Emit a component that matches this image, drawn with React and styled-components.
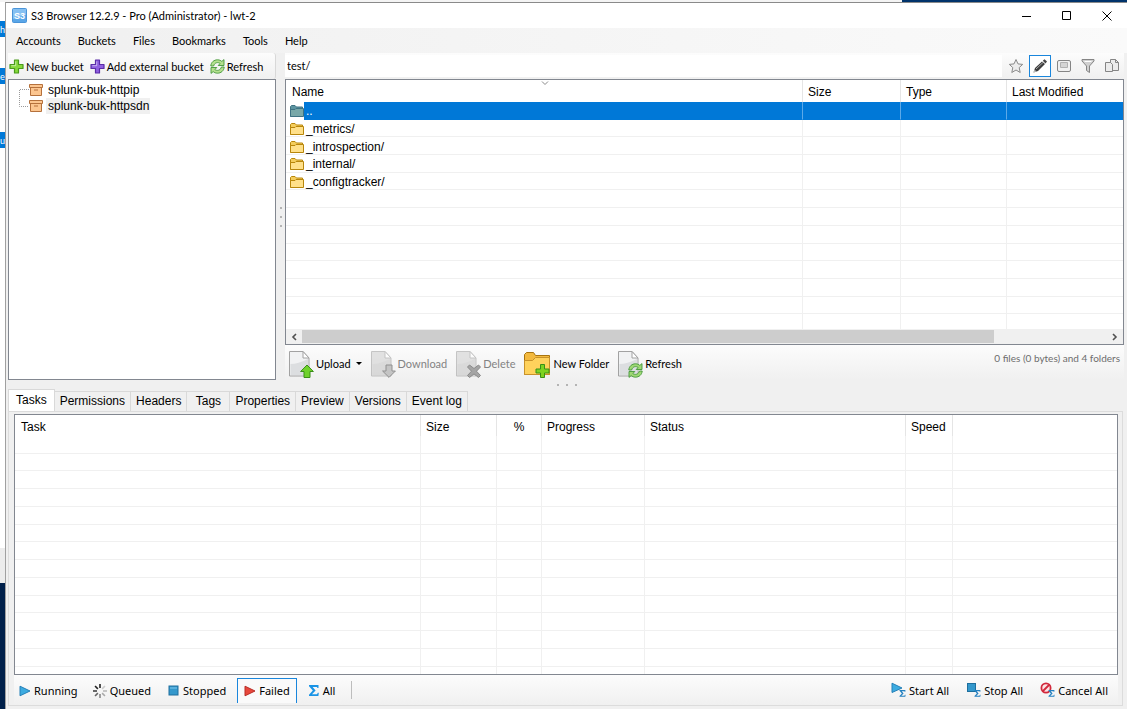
import React, { useState } from "react";
import styled, { createGlobalStyle, css } from "styled-components";

const GlobalStyle = createGlobalStyle`
  * {
    box-sizing: border-box;
  }
  body {
    margin: 0;
    background-color: #f0f0f0;
    color: #000;
    font-family: Lato, "Open Sans", sans-serif;
    font-size: 11px;
  }
  button, input {
    font: inherit;
    color: inherit;
  }
  svg {
    display: block;
    flex: none;
  }
`;

const Screen = styled.div`
  display: grid;
  grid-template-columns: 5px 1fr;
  grid-template-rows: 2px 1fr;
  min-height: 100vh;
`;

const TopEdge = styled.div`
  grid-column: 1 / -1;
  background: linear-gradient(to right, #f4f4f4 80%, #00336b 80%);
`;

const Behind = styled.div`
  display: flex;
  flex-direction: column;
  background-color: #fff;
`;

const BehindGap = styled.div`
  height: ${props => props.$size}px;
  flex: none;
  background-color: ${props => props.$color || "#fff"};
`;

const BehindText = styled.div`
  display: flex;
  align-items: center;
  justify-content: center;
  height: 16px;
  flex: none;
  background-color: #0078d7;
  color: #fff;
  font-size: 9px;
`;

const Desktop = styled.div`
  flex: 1;
  background-color: #00204a;
`;

const Window = styled.div`
  display: flex;
  flex-direction: column;
  min-width: 0;
  border-left: 1px solid #a0a0a0;
  border-top: 1px solid #8a8a8a;
`;

const TitleBar = styled.header`
  display: flex;
  align-items: center;
  height: 25px;
  padding-left: 6px;
  background-color: #fff;
`;

const Title = styled.h1`
  flex: 1;
  margin: 0;
  padding-left: 4px;
  font-size: 11px;
  font-weight: 400;
`;

const WindowButton = styled.button`
  display: flex;
  align-items: center;
  justify-content: center;
  width: 40px;
  height: 25px;
  padding: 0;
  border: 0;
  background: none;
`;

const MenuBar = styled.nav`
  display: flex;
  align-items: center;
  height: 25px;
  padding-left: 10px;
  gap: 17px;
  background: linear-gradient(to right, #f0f0f0, #fafafa);
`;

const MenuItem = styled.button`
  padding: 0;
  border: 0;
  background: none;
`;

const Upper = styled.main`
  display: flex;
  height: 327px;
  padding: 0 3px 0 2px;
`;

const Side = styled.aside`
  display: flex;
  flex-direction: column;
  flex: none;
  width: 268px;
`;

const bar = css`
  display: flex;
  align-items: center;
  background: linear-gradient(#fcfcfc, #f0f0f0);
`;

const SideTools = styled.div`
  ${bar}
  height: 26px;
  padding-left: 1px;
  gap: 6px;
  border-right: 1px solid #d8d8d8;
  border-radius: 0 3px 3px 0;
`;

const ToolButton = styled.button`
  display: flex;
  align-items: center;
  padding: 0;
  gap: ${props => props.$gap || 2}px;
  border: 0;
  background: none;
  white-space: nowrap;

  &:disabled {
    color: #838383;
  }
`;

const Tree = styled.ul`
  flex: 1;
  margin: 0;
  padding: 2px 0 0 10px;
  list-style: none;
  border: 1px solid #828790;
  background-color: #fff;
  font-family: "Liberation Sans", Arial, sans-serif;
  font-size: 12px;
`;

const TreeItem = styled.li`
  display: flex;
  align-items: center;
  height: 16px;
`;

const TreeLabel = styled.span`
  height: 16px;
  margin-left: 3px;
  padding: 0 1px 0 2px;
  line-height: 16px;
  background-color: ${props => (props.$active ? "#f0f0f0" : "transparent")};
`;

const Grip = styled.div`
  display: flex;
  flex-direction: ${props => (props.$row ? "row" : "column")};
  align-items: center;
  justify-content: center;
  gap: 7px;
  flex: none;
  width: ${props => (props.$row ? "auto" : "9px")};
  height: ${props => (props.$row ? "9px" : "auto")};
`;

const Dot = styled.i`
  width: 2px;
  height: 2px;
  background-color: #b4b4b4;
`;

const Content = styled.section`
  display: flex;
  flex-direction: column;
  flex: 1;
  min-width: 0;
`;

const PathRow = styled.div`
  ${bar}
  height: 26px;
`;

const PathInput = styled.input`
  flex: 1;
  min-width: 0;
  height: 22px;
  padding: 0 0 2px 2px;
  border: 0;
  background-color: #fff;
`;

const IconButton = styled.button`
  display: flex;
  align-items: center;
  justify-content: center;
  width: 22px;
  height: 22px;
  padding: 0;
  border: 1px solid ${props => (props.$on ? "#1a86dc" : "transparent")};
  background-color: ${props => (props.$on ? "#fff" : "transparent")};
`;

const PathIcons = styled.div`
  display: flex;
  gap: 2px;
  padding: 0 1px 0 3px;
`;

const ListBox = styled.div`
  position: relative;
  display: flex;
  flex-direction: column;
  height: 266px;
  overflow: hidden;
  border: 1px solid #828790;
  background-color: #fff;
`;

const ListBody = styled.div`
  flex: 1;
  min-height: 0;
  overflow: hidden;
`;

const Table = styled.table`
  width: 100%;
  height: ${props => props.$height}px;
  table-layout: fixed;
  border-collapse: separate;
  border-spacing: 0;
  font-family: "Liberation Sans", Arial, sans-serif;
  font-size: 12px;

  th {
    height: ${props => props.$head}px;
    padding: 2px 5px 0;
    border-right: 1px solid #e5e5e5;
    font-weight: 400;
    text-align: left;
    white-space: nowrap;
  }
  th:first-child {
    padding-left: 6px;
  }
  td {
    height: 17px;
    padding: 2px 0 0;
    border-right: 1px solid #f0f0f0;
    border-bottom: 1px solid #f0f0f0;
    line-height: 14px;
  }
  th:last-child, td:last-child {
    border-right: 0;
  }
`;

const CenterHead = styled.th`
  && {
    text-align: center;
  }
`;

const Row = styled.tr`
  ${props => props.$selected && css`
    color: #fff;
    td {
      background-color: #0078d7;
      border-right-color: #5ca9e8;
      border-bottom-color: transparent;
    }
    td:first-child {
      background-image: linear-gradient(to right, #fff 18px, transparent 18px);
      background-origin: border-box;
    }
  `}
  ${props => props.$short && css`
    td {
      height: 7px;
      border-bottom: 0;
    }
  `}
`;

const FileName = styled.span`
  display: flex;
  align-items: center;
  padding-left: 4px;
  gap: 2px;
`;

const SortMark = styled.span`
  position: absolute;
  top: 1px;
  left: calc(31% - 4px);
`;

const ScrollBar = styled.div`
  display: flex;
  align-items: center;
  flex: none;
  height: 15px;
  background-color: #f0f0f0;
`;

const ScrollTrack = styled.div`
  flex: 1;
  height: 13px;
`;

const ScrollThumb = styled.div`
  width: 86%;
  height: 13px;
  background-color: #cdcdcd;
`;

const ScrollArrow = styled.button`
  display: flex;
  align-items: center;
  justify-content: center;
  width: 16px;
  height: 15px;
  padding: 0;
  border: 0;
  background: none;
`;

const FileTools = styled.div`
  ${bar}
  height: 35px;
  padding: 2px 0 0 3px;
  gap: 8px;
`;

const Caret = styled.svg`
  margin-left: 3px;
`;

const Summary = styled.p`
  align-self: flex-start;
  flex: 1;
  margin: 5px 4px 0 0;
  color: #6d6d6d;
  font-size: 10px;
  text-align: right;
`;

const Tabs = styled.div`
  display: flex;
  align-items: flex-end;
  height: 22px;
  padding-left: 2px;
  font-family: "Liberation Sans", Arial, sans-serif;
  font-size: 12px;
`;

const Tab = styled.button`
  min-width: 43px;
  height: ${props => (props.$active ? 22 : 20)}px;
  padding: 0 ${props => (props.$active ? 7 : 5)}px 2px;
  border: 1px solid #d9d9d9;
  border-left-width: ${props => (props.$active ? 1 : 0)}px;
  border-bottom: 0;
  background-color: ${props => (props.$active ? "#fff" : "#f0f0f0")};
  white-space: nowrap;
`;

const TabPage = styled.section`
  display: flex;
  flex-direction: column;
  flex: 1;
  margin: 0 4px 3px 2px;
  padding: 2px 4px 0 5px;
  border: 1px solid #dcdcdc;
`;

const TaskBox = styled.div`
  flex: 1;
  overflow: hidden;
  border: 1px solid #828790;
  background-color: #fff;
`;

const StatusBar = styled.footer`
  ${bar}
  height: 30px;
  padding-right: 10px;
  gap: 4px;
  font-family: "Noto Sans", sans-serif;
`;

const Filter = styled(ToolButton)`
  height: 25px;
  padding: 0 ${props => props.$pad || 4}px;
  border: 1px solid ${props => (props.$on ? "#1a86dc" : "transparent")};
  border-bottom: 0;
  background-color: ${props => (props.$on ? "#fafafa" : "transparent")};
`;

const Divider = styled.span`
  width: 1px;
  height: 18px;
  margin-left: 4px;
  background-color: #bdbdbd;
`;

const Actions = styled.div`
  display: flex;
  margin-left: auto;
  gap: 17px;
`;

function AppLogo() {
  return (
    <svg width="15" height="15" viewBox="0 0 15 15">
      <rect x="0.5" y="0.5" width="14" height="14" rx="1" fill="#5aa6e8" stroke="#4a94d8" />
      <path d="M1 1h13v6L1 11z" fill="#86c0f2" />
      <text x="7.5" y="10.5" fill="#fff" fontSize="9" fontWeight="700" fontFamily="Liberation Sans" textAnchor="middle">S3</text>
    </svg>
  );
}

function Plus({ fill, stroke }) {
  return (
    <svg width="15" height="15" viewBox="0 0 15 15">
      <path d="M5.500 1h4v4.500H14v4H9.500V14h-4V9.500H1v-4h4.500z" fill={fill} stroke={stroke} strokeWidth="1.2" strokeLinejoin="round" />
      <path d="M6.700 2.400v4.300H2.400" fill="none" stroke="#fff" strokeOpacity=".5" />
    </svg>
  );
}

// two arrows chasing each other, drawn in a 15px box
const swirl = (
  <>
    <path d="M.8 7C1 3.300 4 .8 7.500.8c1.700 0 3.200.6 4.300 1.600L14 .600V6.500H8.200l1.900-2C8.200 2.900 4.700 3.300 3.600 7z" />
    <path d="M14.200 8c-.2 3.700-3.200 6.200-6.700 6.200-1.700 0-3.200-.6-4.300-1.600L1 14.400V8.500h5.800l-1.900 2c1.900 1.600 5.400 1.200 6.500-2.500z" />
  </>
);

function RefreshIcon() {
  return (
    <svg width="15" height="15" viewBox="0 0 15 15" fill="#b4e08e" stroke="#43963a" strokeWidth=".9" strokeLinejoin="round">
      {swirl}
    </svg>
  );
}

function BucketIcon() {
  return (
    <svg width="14" height="14" viewBox="0 0 14 14" fill="#fcc690" stroke="#b5713c">
      <path d="M1.500 4.500h11v8h-11z" />
      <path d="M.5 1.500h13v3H.5z" />
      <path d="M5 7h4" />
    </svg>
  );
}

function Branch({ last }) {
  return (
    <svg width="10" height="16" viewBox="0 0 10 16" fill="none" stroke="#9a9a9a" strokeDasharray="1 1">
      <path d={last ? "M.5 0V8.500H10" : "M10 7.500H.5V16"} />
    </svg>
  );
}

function Folder({ selected }) {
  const stroke = selected ? "#3f7383" : "#b8860b";
  return (
    <svg width="14" height="12" viewBox="0 0 14 12" stroke={stroke} strokeLinejoin="round">
      <path d="M.5 11.500V1.500l1-1H5l1.500 1.500h6v2" fill={selected ? "#5c94a0" : "#f4cd5c"} />
      <path d="M.5 11.500v-7H5l1-1h7.500v8z" fill={selected ? "#79a8a8" : "#ffe08a"} />
    </svg>
  );
}

function PageShape({ faded, children }) {
  return (
    <svg width="26" height="28" viewBox="0 0 26 28">
      <g opacity={faded ? 0.6 : 1}>
        <path d="M1.500 1.500H15l6 6.500v18H1.500z" fill={faded ? "#d2d2d2" : "#f1f2f3"} stroke="#a2a2a2" />
        <path d="M2.500 25V14Q10 14 20 9v16z" fill={faded ? "#c8c8c8" : "#dcdee0"} />
        <path d="M15 1.500V8h6z" fill="#fff" stroke="#a2a2a2" />
      </g>
      {children}
    </svg>
  );
}

function UploadIcon() {
  return (
    <PageShape>
      <path d="M19 15l6.400 6.500h-3.400V27.500h-6v-6h-3.400z" fill="#6fd22b" stroke="#3a8f18" strokeLinejoin="round" />
    </PageShape>
  );
}

function DownloadIcon() {
  return (
    <PageShape faded>
      <path d="M19 27.400l6.400-6.400h-3.400v-6h-6v6h-3.400z" fill="#c4c4c4" stroke="#909090" strokeLinejoin="round" />
    </PageShape>
  );
}

function DeleteIcon() {
  return (
    <PageShape faded>
      <path d="M14.500 15l4.500 3.500 4.500-3.500 2 2-4 4.200 4 4.300-2 2-4.500-3.600-4.500 3.600-2-2 4-4.300-4-4.200z" fill="#a4a4a4" stroke="#8a8a8a" strokeLinejoin="round" />
    </PageShape>
  );
}

function ReloadPageIcon() {
  return (
    <PageShape>
      <g transform="translate(11 13)" fill="#9fd874" stroke="#43963a" strokeWidth=".9" strokeLinejoin="round">
        {swirl}
      </g>
    </PageShape>
  );
}

function NewFolderIcon() {
  return (
    <svg width="28" height="28" viewBox="0 0 28 28" strokeLinejoin="round">
      <path d="M1.500 24.500V4.500l2-2h7l2 3h14v19z" fill="#f3b93e" stroke="#a8740f" />
      <path d="M1.500 24.500v-14h8l3-3h14v17z" fill="#ffd25c" stroke="#c8922a" />
      <path d="M17.500 14.500h4v4.500H26v4h-4.500v4.500h-4V23H13v-4h4.500z" fill="#7ed321" stroke="#3a8f18" />
    </svg>
  );
}

function Star() {
  return (
    <svg width="16" height="16" viewBox="0 0 16 16">
      <path d="M8 1.500l2 4.400 4.700.5-3.500 3.200 1 4.900L8 12l-4.200 2.500 1-4.900L1.300 6.400 6 5.900z" fill="#ececec" stroke="#8a8a8a" strokeLinejoin="round" />
    </svg>
  );
}

function Pencil() {
  return (
    <svg width="16" height="16" viewBox="0 0 16 16">
      <path d="M1.500 14.500l1.500-4.500L10 3.500 13 6 6 13z" fill="#3c3c3c" />
      <path d="M4 11l7-6.500" stroke="#aaa" />
      <path d="M10.800 2.800l1.700-1.500 2.500 2.300-1.500 1.800z" fill="#444" />
      <path d="M1.500 14.500l1-3 2 2z" fill="#bbb" />
    </svg>
  );
}

function Panel() {
  return (
    <svg width="14" height="14" viewBox="0 0 14 14" fill="#f0f0f0" stroke="#858585">
      <rect x=".5" y="1.500" width="13" height="11" rx="1.500" />
      <path d="M3.500 3.500h7v5h-7z" fill="#d4d4d4" stroke="#b0b0b0" />
    </svg>
  );
}

function Funnel() {
  return (
    <svg width="14" height="16" viewBox="0 0 14 16">
      <path d="M1 1.500h12v1.500L8.500 8v6.500l-3-2V8L1 3z" fill="#d0d0d0" stroke="#858585" strokeLinejoin="round" />
      <path d="M3.500 3.500h7" stroke="#fff" />
    </svg>
  );
}

function Pages() {
  return (
    <svg width="16" height="16" viewBox="0 0 16 16" fill="#ececec" stroke="#858585">
      <path d="M6.500 1.500h5l3 3v8h-8z" />
      <path d="M1.500 4.500h5l2 2v7h-7z" />
      <path d="M11.500 1.500v3h3" fill="none" />
    </svg>
  );
}

function Play({ red }) {
  return (
    <svg width="12" height="12" viewBox="0 0 12 12">
      <path d="M1 1.200L11 6 1 10.800z" fill={red ? "#e8483c" : "#3cabe0"} stroke={red ? "#b82c26" : "#2480b8"} strokeLinejoin="round" />
    </svg>
  );
}

function Spinner() {
  const shades = ["#222", "#ccc", "#bbb", "#aaa", "#888", "#666", "#444", "#222"];
  return (
    <svg width="14" height="14" viewBox="0 0 14 14" strokeWidth="1.600">
      {shades.map((color, i) => (
        <path key={i} d="M7 0v4" stroke={color} transform={`rotate(${i * 45} 7 7)`} />
      ))}
    </svg>
  );
}

function StopIcon() {
  return (
    <svg width="12" height="11" viewBox="0 0 12 11">
      <rect x="1" y="1" width="9" height="9" fill="#3498cc" stroke="#1e6f9e" />
      <path d="M2 3h7" stroke="#7cc8ee" />
    </svg>
  );
}

const sigma = "M0 0h9.500v3H8.500L7.800 1.900H3.600L6.600 5.500 3 9.200H8L8.800 7.800H9.800L9.400 11H0V9.800L3.800 5.600 0 1.300z";

function Sigma() {
  return (
    <svg width="11" height="11" viewBox="0 0 11 11">
      <path d={sigma} fill="#1a94e6" />
    </svg>
  );
}

function AllIcon({ kind }) {
  return (
    <svg width="15" height="16" viewBox="0 0 15 16">
      {kind === "start" && <path d="M1 1.200L11 6 1 10.500z" fill="#3cabe0" stroke="#2480b8" />}
      {kind === "stop" && <rect x="1.500" y="1.500" width="8" height="8" fill="#3498cc" stroke="#1e6f9e" />}
      {kind === "cancel" && (
        <g fill="none" stroke="#d2283c" strokeWidth="1.800">
          <circle cx="6" cy="6" r="4.600" fill="#fbe4e4" />
          <path d="M9 3L3 9" />
        </g>
      )}
      <path d={sigma} fill="#2480c0" transform="translate(8.500 8) scale(.62)" />
    </svg>
  );
}

const menus = ["Accounts", "Buckets", "Files", "Bookmarks", "Tools", "Help"];
const tabs = ["Tasks", "Permissions", "Headers", "Tags", "Properties", "Preview", "Versions", "Event log"];
const buckets = ["splunk-buk-httpip", "splunk-buk-httpsdn"];
const files = ["..", "_metrics/", "_introspection/", "_internal/", "_configtracker/"];
const emptyFileRows = [0, 1, 2, 3, 4, 5, 6, 7];
const taskRows = [0, 1, 2, 3, 4, 5, 6, 7, 8, 9, 10, 11, 12, 13];

const filters = [
  { name: "Running", icon: <Play />, pad: 4 },
  { name: "Queued", icon: <Spinner />, pad: 5 },
  { name: "Stopped", icon: <StopIcon />, pad: 6 },
  { name: "Failed", icon: <Play red />, pad: 6 },
  { name: "All", icon: <Sigma />, pad: 7 }
];

function FileList() {
  const [selected, setSelected] = useState("..");
  return (
    <ListBox>
      <ListBody>
        <Table $height={252} $head={22}>
          <colgroup>
            <col />
            <col width="98" />
            <col width="106" />
            <col width="116" />
          </colgroup>
          <thead>
            <tr>
              <th>Name</th>
              <th>Size</th>
              <th>Type</th>
              <th>Last Modified</th>
            </tr>
          </thead>
          <tbody>
            {files.map(file => (
              <Row key={file} $selected={file === selected} onClick={() => setSelected(file)}>
                <td>
                  <FileName>
                    <Folder selected={file === selected} />
                    {file}
                  </FileName>
                </td>
                <td />
                <td />
                <td />
              </Row>
            ))}
            {emptyFileRows.map(n => (
              <Row key={n}>
                <td />
                <td />
                <td />
                <td />
              </Row>
            ))}
          </tbody>
        </Table>
      </ListBody>
      <SortMark>
        <svg width="8" height="5" viewBox="0 0 8 5" fill="none" stroke="#8a8a8a">
          <path d="M1 .5l3 3 3-3" />
        </svg>
      </SortMark>
      <ScrollBar>
        <ScrollArrow aria-label="Scroll left">
          <svg width="6" height="8" viewBox="0 0 6 8" fill="none" stroke="#505050" strokeWidth="1.600">
            <path d="M5 1L2 4l3 3" />
          </svg>
        </ScrollArrow>
        <ScrollTrack>
          <ScrollThumb />
        </ScrollTrack>
        <ScrollArrow aria-label="Scroll right">
          <svg width="6" height="8" viewBox="0 0 6 8" fill="none" stroke="#505050" strokeWidth="1.600">
            <path d="M1 1l3 3-3 3" />
          </svg>
        </ScrollArrow>
      </ScrollBar>
    </ListBox>
  );
}

function TaskList() {
  return (
    <TaskBox>
      <Table $height={259} $head={21}>
        <colgroup>
          <col width="406" />
          <col width="76" />
          <col width="45" />
          <col width="103" />
          <col width="261" />
          <col width="47" />
          <col />
        </colgroup>
        <thead>
          <tr>
            <th>Task</th>
            <th>Size</th>
            <CenterHead>%</CenterHead>
            <th>Progress</th>
            <th>Status</th>
            <th>Speed</th>
            <th />
          </tr>
        </thead>
        <tbody>
          {taskRows.map(n => (
            <Row key={n} $short={n === taskRows.length - 1}>
              <td />
              <td />
              <td />
              <td />
              <td />
              <td />
              <td />
            </Row>
          ))}
        </tbody>
      </Table>
    </TaskBox>
  );
}

function App() {
  const [path, setPath] = useState("test/");
  const [tab, setTab] = useState("Tasks");
  const [filter, setFilter] = useState("Failed");
  return (
    <Screen>
      <GlobalStyle />
      <TopEdge />
      <Behind>
        <BehindGap $size={19} />
        <BehindText>h</BehindText>
        <BehindGap $size={31} />
        <BehindText>e</BehindText>
        <BehindGap $size={48} />
        <BehindText>u</BehindText>
        <BehindGap $size={400} />
        <BehindGap $size={35} $color="#ececec" />
        <Desktop />
      </Behind>
      <Window>
        <TitleBar>
          <AppLogo />
          <Title>S3 Browser 12.2.9 - Pro (Administrator) - lwt-2</Title>
          <WindowButton aria-label="Minimize">
            <svg width="10" height="10" viewBox="0 0 10 10" stroke="#000">
              <path d="M0 5.500h9" />
            </svg>
          </WindowButton>
          <WindowButton aria-label="Maximize">
            <svg width="10" height="10" viewBox="0 0 10 10" fill="none" stroke="#000">
              <path d="M.5.500h8v8h-8z" />
            </svg>
          </WindowButton>
          <WindowButton aria-label="Close">
            <svg width="10" height="10" viewBox="0 0 10 10" stroke="#000">
              <path d="M.5.500l9 9M9.500.500l-9 9" />
            </svg>
          </WindowButton>
        </TitleBar>
        <MenuBar>
          {menus.map(name => (
            <MenuItem key={name}>{name}</MenuItem>
          ))}
        </MenuBar>
        <Upper>
          <Side>
            <SideTools>
              <ToolButton>
                <Plus fill="#86d93b" stroke="#4a9a1c" />
                New bucket
              </ToolButton>
              <ToolButton>
                <Plus fill="#9060e0" stroke="#5a2ca8" />
                Add external bucket
              </ToolButton>
              <ToolButton>
                <RefreshIcon />
                Refresh
              </ToolButton>
            </SideTools>
            <Tree>
              {buckets.map((name, i) => (
                <TreeItem key={name}>
                  <Branch last={i === buckets.length - 1} />
                  <BucketIcon />
                  <TreeLabel $active={i === 1}>{name}</TreeLabel>
                </TreeItem>
              ))}
            </Tree>
          </Side>
          <Grip>
            <Dot />
            <Dot />
            <Dot />
          </Grip>
          <Content>
            <PathRow>
              <PathInput aria-label="Path" value={path} onChange={e => setPath(e.target.value)} />
              <PathIcons>
                <IconButton aria-label="Favorite">
                  <Star />
                </IconButton>
                <IconButton aria-label="Edit path" $on>
                  <Pencil />
                </IconButton>
                <IconButton aria-label="View">
                  <Panel />
                </IconButton>
                <IconButton aria-label="Filter">
                  <Funnel />
                </IconButton>
                <IconButton aria-label="Copy">
                  <Pages />
                </IconButton>
              </PathIcons>
            </PathRow>
            <FileList />
            <FileTools>
              <ToolButton>
                <UploadIcon />
                Upload
                <Caret width="6" height="4" viewBox="0 0 6 4">
                  <path d="M0 0h6L3 3z" />
                </Caret>
              </ToolButton>
              <ToolButton disabled>
                <DownloadIcon />
                Download
              </ToolButton>
              <ToolButton disabled>
                <DeleteIcon />
                Delete
              </ToolButton>
              <ToolButton>
                <NewFolderIcon />
                New Folder
              </ToolButton>
              <ToolButton>
                <ReloadPageIcon />
                Refresh
              </ToolButton>
              <Summary>0 files (0 bytes) and 4 folders</Summary>
            </FileTools>
          </Content>
        </Upper>
        <Grip $row>
          <Dot />
          <Dot />
          <Dot />
        </Grip>
        <Tabs role="tablist">
          {tabs.map(name => (
            <Tab key={name} role="tab" aria-selected={name === tab} $active={name === tab} onClick={() => setTab(name)}>
              {name}
            </Tab>
          ))}
        </Tabs>
        <TabPage>
          <TaskList />
          <StatusBar>
            {filters.map(({ name, icon, pad }) => (
              <Filter key={name} $gap={3} $pad={pad} $on={name === filter} onClick={() => setFilter(name)}>
                {icon}
                {name}
              </Filter>
            ))}
            <Divider />
            <Actions>
              <ToolButton $gap={3}>
                <AllIcon kind="start" />
                Start All
              </ToolButton>
              <ToolButton $gap={3}>
                <AllIcon kind="stop" />
                Stop All
              </ToolButton>
              <ToolButton $gap={3}>
                <AllIcon kind="cancel" />
                Cancel All
              </ToolButton>
            </Actions>
          </StatusBar>
        </TabPage>
      </Window>
    </Screen>
  );
}

export default App;
